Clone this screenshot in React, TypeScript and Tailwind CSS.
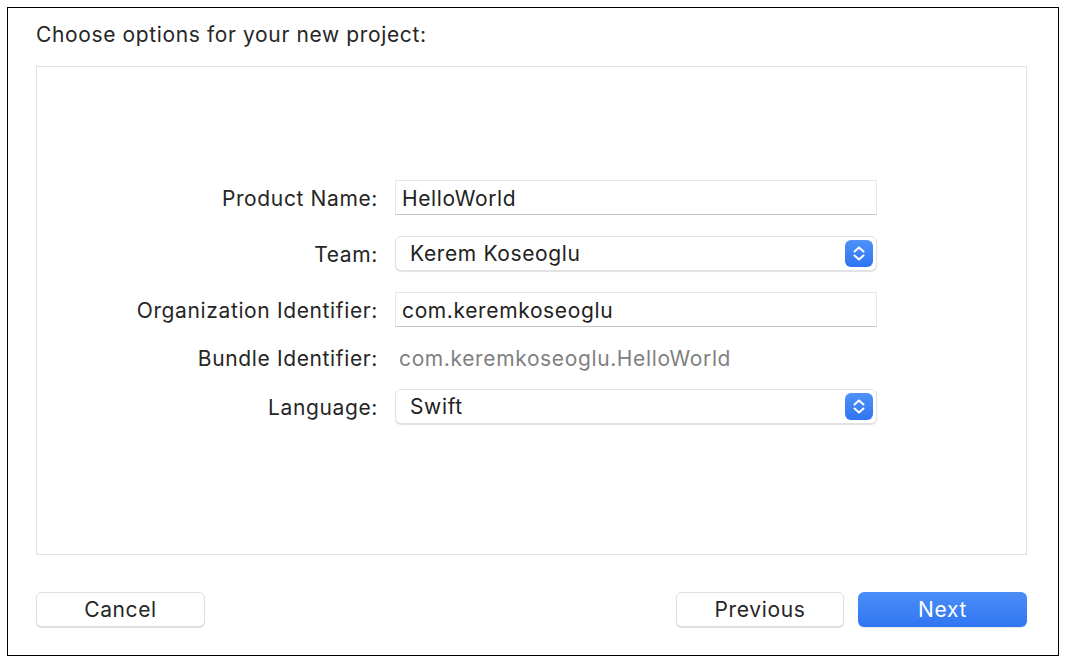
import React from 'react'

const font = { fontFamily: 'Inter, "Noto Sans", sans-serif' }

function Stepper() {
  return (
    <div className="w-[28px] h-[27px] rounded-[6px] bg-gradient-to-b from-[#4f92f8] to-[#2f74f2] flex items-center justify-center">
      <svg width="28" height="27" viewBox="0 0 28 27" fill="none">
        <path d="M9.5 11.5 L14 7.5 L18.5 11.5" stroke="white" strokeWidth="2" strokeLinecap="round" strokeLinejoin="round" />
        <path d="M9.5 15.5 L14 19.5 L18.5 15.5" stroke="white" strokeWidth="2" strokeLinecap="round" strokeLinejoin="round" />
      </svg>
    </div>
  )
}

function TextField({ value }: { value: string }) {
  return (
    <div className="w-[482px] h-[35px] bg-white border border-[#e6e6e6] border-b-[#c4c4c4] flex items-center pl-[6px] pt-[2px] text-[21px] tracking-[0.03em] leading-[24px] text-[#222]">
      {value}
    </div>
  )
}

function Popup({ value }: { value: string }) {
  return (
    <div className="w-[482px] h-[35px] bg-white rounded-[6px] border border-[#e2e2e2] shadow-[0_1px_1px_rgba(0,0,0,0.12)] flex items-center justify-between pl-[14px] pr-[3px] text-[21px] tracking-[0.03em] leading-[24px] text-[#222]">
      <span>{value}</span>
      <Stepper />
    </div>
  )
}

function Row({ label, children, className = '' }: { label: string; children: React.ReactNode; className?: string }) {
  return (
    <div className={`flex items-center ${className}`}>
      <div className="w-[341px] pt-[2px] text-right text-[21px] tracking-[0.03em] leading-[24px] text-[#262626]">{label}</div>
      <div className="ml-[17px]">{children}</div>
    </div>
  )
}

export default function App() {
  return (
    <div className="w-[1068px] h-[663px] bg-white pt-[7px] pl-[7px]" style={font}>
      <div className="w-[1052px] h-[649px] border border-black flex flex-col pl-[28px] pr-[31px]">
        <h1 className="pt-[15px] text-[21px] tracking-[0.03em] leading-[24px] text-[#262626]">
          Choose options for your new project:
        </h1>

        {/* Options panel */}
        <div className="mt-[19px] w-[991px] h-[489px] border border-[#e2e2e2] pt-[113px]">
          <Row label="Product Name:" className="h-[35px]">
            <TextField value="HelloWorld" />
          </Row>
          <Row label="Team:" className="h-[35px] mt-[21px]">
            <Popup value="Kerem Koseoglu" />
          </Row>
          <Row label="Organization Identifier:" className="h-[35px] mt-[21px]">
            <TextField value="com.keremkoseoglu" />
          </Row>
          <Row label="Bundle Identifier:" className="h-[28px] mt-[17px]">
            <div className="pl-[4px] pt-[2px] text-[21px] tracking-[0.03em] leading-[24px] text-[#808080]">com.keremkoseoglu.HelloWorld</div>
          </Row>
          <Row label="Language:" className="h-[35px] mt-[17px]">
            <Popup value="Swift" />
          </Row>
        </div>

        {/* Buttons */}
        <div className="mt-[37px] flex items-center w-[991px]">
          <button className="w-[169px] h-[35px] rounded-[6px] bg-white border border-[#e0e0e0] shadow-[0_1px_1px_rgba(0,0,0,0.15)] text-[21px] tracking-[0.03em] leading-[24px] text-[#262626]">
            Cancel
          </button>
          <div className="ml-auto flex gap-[14px]">
            <button className="w-[168px] h-[35px] rounded-[6px] bg-white border border-[#e0e0e0] shadow-[0_1px_1px_rgba(0,0,0,0.15)] text-[21px] tracking-[0.03em] leading-[24px] text-[#262626]">
              Previous
            </button>
            <button className="w-[169px] h-[35px] rounded-[6px] bg-gradient-to-b from-[#4b8ef7] to-[#2f75f2] shadow-[0_1px_1px_rgba(0,0,0,0.1)] text-[21px] tracking-[0.03em] leading-[24px] text-white">
              Next
            </button>
          </div>
        </div>
      </div>
    </div>
  )
}
